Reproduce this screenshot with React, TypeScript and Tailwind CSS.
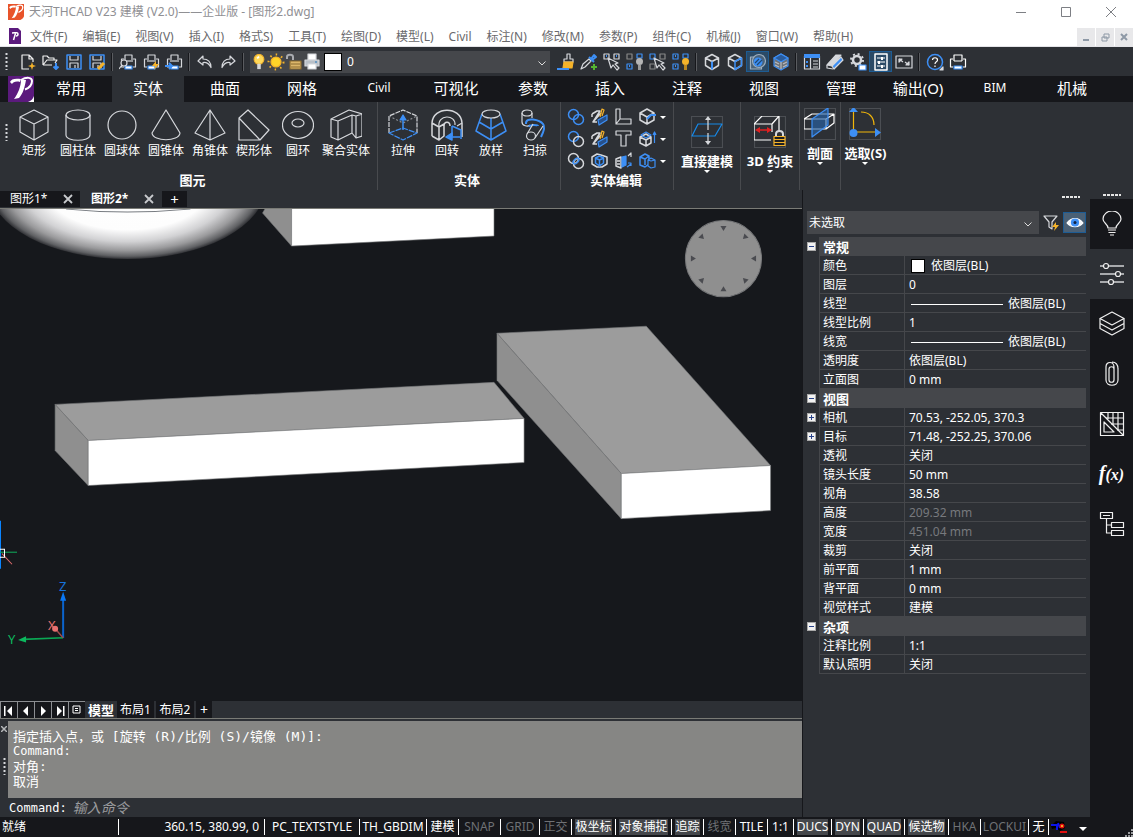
import { useState } from 'react'
import type { ReactNode } from 'react'

const W = '#d6d8dc'
const B = '#3d8ff5'
const Y = '#f5b32a'

function Svg({ size = 18, box, children }: { size?: number; box?: number; children: ReactNode }) {
  const b = box ?? size
  return (
    <svg
      width={size}
      height={size}
      viewBox={`0 0 ${b} ${b}`}
      fill="none"
      stroke={W}
      strokeWidth="1.2"
      strokeLinejoin="round"
      className="block shrink-0"
      aria-hidden="true"
    >
      {children}
    </svg>
  )
}

function Logo({ size, bg }: { size: number; bg: string }) {
  return (
    <svg width={size} height={size} viewBox="0 0 26 26" className="block shrink-0" fill="none" aria-hidden="true">
      <rect width="26" height="26" fill={bg} />
      <path d="M2 6c1-3 5-4 11-3l-1 3C8 5 5 6 4 8z" fill="#fff" />
      <path d="M13 4h5c-1 6-3 14-7 18l-5 1c4-5 7-13 7-19z" fill="#fff" />
      <path d="M13 4c6-3.500 11-2.500 11 1 0 4-3 7-7 8.500" stroke="#fff" strokeWidth="2" />
      <path d="M26 20v6h-6c3-1 5-3 6-6z" fill="#fff" />
    </svg>
  )
}

function Grip({ className = '' }: { className?: string }) {
  return (
    <svg width="3" height="17" viewBox="0 0 3 17" className={'shrink-0 ' + className} aria-hidden="true">
      <path d="M1.5 0v17" stroke="#d6d8dc" strokeWidth="2" strokeDasharray="2 2" />
    </svg>
  )
}

function HGrip({ className = '' }: { className?: string }) {
  return (
    <svg width="18" height="2" viewBox="0 0 18 2" className={'block shrink-0 ' + className} aria-hidden="true">
      <path d="M0 1h18" stroke="#e5e5e5" strokeWidth="2" strokeDasharray="3 1" />
    </svg>
  )
}

// quick access icons, 18 x 18
const floppy = (
  <>
    <path d="M2 2h14v14H2z" stroke={B} strokeWidth="1.500" />
    <path d="M5 3v4h8V3" />
    <path d="M5 15v-5h8v5M10 12v3" />
  </>
)
const printer = (
  <>
    <path d="M6 7V2h7v5M5 6H2.500v8H5M14 6h2.500v8H14" />
    <path d="M5 8h9" />
    <path d="M6 13h7v3H6z" fill="#fff" stroke={B} />
  </>
)
const cube = <path d="M9 1.500l6.500 3.500v7.500L9 16.500l-6.500-4V5zM2.500 5L9 8.500 15.500 5" strokeWidth="1.500" />

const quick: { label: string; icon: ReactNode; on?: boolean }[][] = [
  [
    { label: '新建', icon: <><path d="M10 16H3V2h7l4 4v3M10 2v4h4" stroke="#f0f0f0" /><path d="M13 9l1 3 3 1-3 1-1 3-1-3-3-1 3-1z" fill={Y} stroke="none" /></> },
    { label: '打开', icon: <><path d="M1 12V3h4l2 2h5v2M1 12L5 7h10l-2 3M1 12h9" stroke="#f0f0f0" /><path d="M14 10v6M11.500 13.500L14 16l2.500-2.500" stroke={B} strokeWidth="2" /></> },
    { label: '保存', icon: floppy },
    { label: '另存为', icon: <>{floppy}<path d="M10 16l6-6" stroke={Y} strokeWidth="3" /></> },
  ],
  [
    { label: '打印预览', icon: <>{printer}<circle cx="5" cy="10" r="3" fill="#2d3035" /><path d="M3 12l-3 4" /></> },
    { label: '快速打印', icon: <>{printer}<path d="M14 8l-4 5h3l-1 4 5-6h-3z" fill={Y} stroke="none" /></> },
    { label: '发布', icon: <>{printer}<path d="M0 13h6M4 10l3 3-3 3" stroke={B} strokeWidth="2" /></> },
  ],
  [
    { label: '撤销', icon: <path d="M7 3L2 8l5 4V9.500c4-.5 6 1 8 5C15 9 12 6 7 6z" /> },
    { label: '重做', icon: <path d="M11 3l5 5-5 4V9.500c-4-.5-6 1-8 5C3 9 6 6 11 6z" /> },
  ],
]

const quick2: { label: string; icon: ReactNode; on?: boolean }[][] = [
  [
    { label: '特性匹配', icon: <><path d="M10 1h3v5h3v3H7V6h3z" /><path d="M7 9h9l-1 6H6z" fill={Y} stroke={Y} /><path d="M0 16h12" stroke={B} strokeWidth="2" /></> },
    { label: '拾取', icon: <><path d="M1 16l2-5 6-5 2 2-6 6z" /><path d="M9 4l5 5M11 6l3-4 2 2-4 3" stroke={B} strokeWidth="2" /><path d="M14 11v6M11 14h6" stroke="#55b531" strokeWidth="2" /></> },
    { label: '选择', icon: <><path d="M1 1h5v5H1zM11 1h5v5h-5z" /><path d="M5 5l3 10 2-3 4 5 2-2-4-4 3-1z" fill="#2d3035" /><path d="M3 3h1M13 3h1" stroke={B} strokeWidth="2" /></> },
    { label: '隐藏', icon: <><path d="M1 1h5v5H1z" stroke="#888" /><path d="M11 1h5v4h-5zM1 11h5v5H1z" stroke={B} /><path d="M3 13h1" stroke={B} strokeWidth="2" /><circle cx="13.500" cy="8.500" r="3.500" fill="#b5b5b5" stroke="none" /><path d="M13.500 12v5" strokeWidth="3" stroke="#999" /></> },
    { label: '反选', icon: <><path d="M1 1h5v5H1z" stroke={B} /><path d="M11 1h5v5h-5zM1 11h5v5H1z" stroke="#888" /><path d="M5 5l3 10 2-3 4 5 2-2-4-4 3-1z" fill="#2d3035" /></> },
    { label: '显示', icon: <><path d="M1 1h5v5H1zM11 1h5v4h-5zM1 11h5v5H1z" stroke={B} /><path d="M3 3h1M3 13h1" stroke={B} strokeWidth="2" /><circle cx="13.500" cy="8.500" r="3.500" fill={Y} stroke="none" /><path d="M13.500 12v5" strokeWidth="3" stroke="#b98620" /></> },
  ],
  [
    { label: '等轴测', icon: <>{cube}<path d="M9 8.500v8" stroke={B} strokeWidth="2" /></> },
    { label: '侧视', icon: <>{cube}<path d="M9 8.500l6.500-3.500v7.500L9 16.500z" stroke={B} strokeWidth="1.500" /></> },
    { label: '着色', on: true, icon: <><path d="M1.500 4h11v12h-11z" fill="#4d6478" stroke="#9fb0bf" /><circle cx="10" cy="8" r="6.500" fill="#48627c" stroke="#9fb0bf" /><circle cx="9" cy="9" r="4.500" fill={B} stroke="none" /><path d="M6 10l4-4M8 12l5-5" stroke="#204870" /></> },
    { label: '实体视图', icon: <><path d="M9 1l7 4v8l-7 4-7-4V5z" fill="#6d7278" stroke={B} /><path d="M2 5l7 4 7-4-7-4z" fill="#2a5c9c" stroke={B} /><path d="M3 9l4 2M3 12l4 2M11 11l4-2M11 14l4-2M9 9v7" stroke="#b8bcc2" /></> },
  ],
  [
    { label: '面板', icon: <><path d="M1.500 3h15v13h-15z" /><path d="M1 3h16" stroke={B} strokeWidth="4" /><path d="M4 8v6" stroke={B} strokeWidth="2" strokeDasharray="2 2" /><path d="M7.500 5v11M10 8h5M10 11h5M10 14h5" /></> },
    { label: '清理', icon: <><path d="M1 12L10 2h5l-9 11z" fill={W} /><path d="M6 13l9-9 2 3-9 9z" fill={B} stroke={W} /><path d="M1 12v3l6 1" /></> },
    { label: '设置', icon: <><circle cx="8" cy="7" r="4" strokeWidth="2.500" /><circle cx="8" cy="7" r="6" strokeWidth="2" strokeDasharray="2 2.700" /><path d="M10 12h7v5h-7z" fill="#fff" stroke={B} /></> },
    { label: '特性', on: true, icon: <><path d="M3 1h12v16H3z" stroke="#fff" strokeWidth="1.500" /><path d="M5 5h8M5 9h8M5 13h8" stroke="#fff" /><path d="M10 4v3M7 8v3M10 12v3" stroke="#fff" strokeWidth="2" /></> },
    { label: '全屏', icon: <><path d="M1 3h16v12H1z" /><path d="M4 9V6h3zM14 9v3h-3z" fill={W} /><path d="M4 6l4 3M14 12l-4-3" /></> },
  ],
  [
    { label: '帮助', icon: <><circle cx="9" cy="9" r="7.500" stroke={B} strokeWidth="1.500" /><path d="M6.500 7c0-3 5-3 5 0 0 2-2.500 1.500-2.500 4M9 12.500V14" stroke="#fff" /><path d="M17 14v3h-3z" fill={W} /></> },
    { label: '打印', icon: <><path d="M5 8V2h8v6M5 8h8M4 6H1.500v8H4M14 6h2.500v8H14" stroke="#fff" /><path d="M5 13h8v3H5z" fill="#fff" stroke={B} /></> },
  ],
]

// ribbon icons, 32 x 32
const solids: [string, ReactNode][] = [
  ['矩形', <path d="M16 1l14 7v15l-14 8-14-8V8zM2 8l14 7 14-7M16 15v16" />],
  ['圆柱体', <><ellipse cx="16" cy="6" rx="12" ry="5" /><path d="M4 6v20c0 7 24 7 24 0V6" /></>],
  ['圆球体', <circle cx="16" cy="16" r="14" />],
  ['圆锥体', <path d="M16 1L2 24c1 9 27 9 28 0z" />],
  ['角锥体', <path d="M16 1L1 24l15 7 15-7zM16 1v30" />],
  ['楔形体', <path d="M1 9l9-8 21 20-9 10H1zM1 9l21 22" />],
  ['圆环', <><ellipse cx="16" cy="16" rx="15.500" ry="13.500" /><ellipse cx="16" cy="14" rx="6" ry="4" /></>],
  ['聚合实体', <path d="M1 10L19 1l13 4v22l-6 2-4-5-14 7-7-3zM1 10l7 2 14-6 4 1 6-2M8 12v19M22 6v18M26 7v22" />],
]

const bodies: [string, ReactNode][] = [
  ['拉伸', <><path d="M2 24V7l14-6 14 6v17" strokeDasharray="5 1" /><path d="M2 7l14 7 14-7" stroke="#8a8d92" strokeDasharray="2 2" /><path d="M2 24l14-5 14 5-14 7z" stroke={B} strokeDasharray="6 1" /><path d="M16 21V8" stroke={B} strokeWidth="1.500" /><path d="M16 6l-3 5h6z" fill={B} stroke={B} /></>],
  ['回转', <><path d="M1 27V14C2-3 30-3 31 14v14M1 27l7 4 5-4V17c0-5 6-5 6 0M1 14l7 4 5-3M8 18v12" strokeWidth="1.500" /><path d="M8 18c-2-13 17-13 16-2M31 14l-5 3" /><path d="M21 17l9 4v9M21 17v10" stroke={B} strokeWidth="1.500" /><path d="M20 28h9M15 28l6-4v7z" fill={B} stroke={B} strokeWidth="1.500" /></>],
  ['放样', <><path d="M7 5L1 22l15 9 15-9L25 5M4 13l12 7 12-7M16 9v22" stroke={B} strokeWidth="1.500" /><ellipse cx="16" cy="5" rx="9" ry="4" fill="#2d3035" /></>],
  ['扫掠', <><ellipse cx="8" cy="4" rx="5" ry="3" /><path d="M3 4v9c0 4 6 5 8 3M13 4v5" /><path d="M7 15c-1-8 14-4 17 0 3 3 0 9-2 13M10 18c1-3 9-2 9-1" stroke={B} strokeWidth="2" /><ellipse cx="12" cy="27" rx="4.500" ry="4" /><path d="M8 25l6-10M16 29l8-12" /></>],
]

const rings = (a: string, b: string) => (
  <g strokeWidth="1.500">
    <circle cx="6.500" cy="6.500" r="5" stroke={a} />
    <circle cx="11.500" cy="11.500" r="5" stroke={b} />
  </g>
)
const slice = (
  <>
    <path d="M1 6l5-3h3L2 14l8-9M1 6v3M2 14h4" strokeWidth="1.500" />
    <path d="M7 12l9-5v5l-8 5z" fill="#27508a" stroke={B} />
    <path d="M9 9l2-8 2 1-2 6" stroke={Y} />
  </>
)

const edits: { label: string; icon: ReactNode; menu?: boolean }[][] = [
  [
    { label: '并集', icon: rings(B, B) },
    { label: '剖切', icon: slice },
    { label: '角铁', icon: <path d="M1 1h4v10h11v5H1zM5 11l-4 5" /> },
    { label: '拉伸面', menu: true, icon: <><path d="M8 1l7 4v7l-7 4-7-4V5zM1 5l7 4 7-4M8 9v7" strokeWidth="1.500" /><path d="M8 11l4-4h5" stroke={B} strokeWidth="2" /></> },
  ],
  [
    { label: '差集', icon: rings(B, W) },
    { label: '切割', icon: slice },
    { label: '丁字', icon: <path d="M1 1h15v4h-5v11H6V5H1z" /> },
    { label: '压印', menu: true, icon: <><path d="M7 4l5 3v6l-5 3-6-3V7zM1 7l6 3 5-3M7 10v6" strokeWidth="1.500" /><path d="M2 5l5-3 5 3-5 3zM15.500 13V3M14 5l1.500-3L17 5" stroke={B} /></> },
  ],
  [
    { label: '交集', icon: <>{rings(W, W)}<ellipse cx="9" cy="9" rx="3.500" ry="2" stroke={B} strokeWidth="1.500" transform="rotate(-45 9 9)" /></> },
    { label: '干涉', icon: <><path d="M1 5l5-3 4 1 6 2v7l-5 3H6l-5-3z" strokeWidth="1.500" /><path d="M8.500 4l4 2v5l-4 3-4-3V6zM4.500 6l4 2 4-2M8.500 8v6" stroke={B} strokeWidth="1.500" /></> },
    { label: '转换', icon: <><path d="M1 7l5-2v11l-5-2zM2 9h3M2 12h3" strokeWidth="1.500" /><path d="M7 5l4-1v9l-4 2z" fill={B} stroke={B} /><path d="M13 4l3-3v4" /><path d="M12 15l4-3M16 14v-3h-3" stroke={B} /></> },
    { label: '复制面', menu: true, icon: <><path d="M1 5l5-3 4 2v8l-4 3-5-2zM6 7v6M1 5l5 2 4-3" stroke={B} strokeWidth="1.500" /><path d="M9 8l3-2 4 2v7l-4 1-3-2zM9 8l3 1 4-1" stroke={B} fill="#2d3035" /></> },
  ],
]

const menus = ['文件(F)', '编辑(E)', '视图(V)', '插入(I)', '格式S)', '工具(T)', '绘图(D)', '模型(L)', 'Civil', '标注(N)', '修改(M)', '参数(P)', '组件(C)', '机械(J)', '窗口(W)', '帮助(H)']
const tabs = ['常用', '实体', '曲面', '网格', 'Civil', '可视化', '参数', '插入', '注释', '视图', '管理', '输出(O)', 'BIM', '机械']

type Row = { name: string; value?: string; kind?: 'head' | 'swatch' | 'line' | 'dim'; box?: '-' | '+' }

const rows: Row[] = [
  { name: '常规', kind: 'head', box: '-' },
  { name: '颜色', value: '依图层(BL)', kind: 'swatch' },
  { name: '图层', value: '0' },
  { name: '线型', value: '依图层(BL)', kind: 'line' },
  { name: '线型比例', value: '1' },
  { name: '线宽', value: '依图层(BL)', kind: 'line' },
  { name: '透明度', value: '依图层(BL)' },
  { name: '立面图', value: '0 mm' },
  { name: '视图', kind: 'head', box: '-' },
  { name: '相机', value: '70.53, -252.05, 370.3', box: '+' },
  { name: '目标', value: '71.48, -252.25, 370.06', box: '+' },
  { name: '透视', value: '关闭' },
  { name: '镜头长度', value: '50 mm' },
  { name: '视角', value: '38.58' },
  { name: '高度', value: '209.32 mm', kind: 'dim' },
  { name: '宽度', value: '451.04 mm', kind: 'dim' },
  { name: '裁剪', value: '关闭' },
  { name: '前平面', value: '1 mm' },
  { name: '背平面', value: '0 mm' },
  { name: '视觉样式', value: '建模' },
  { name: '杂项', kind: 'head', box: '-' },
  { name: '注释比例', value: '1:1' },
  { name: '默认照明', value: '关闭' },
]

const status: { text: string; w: string; state?: 'on' | 'off' }[] = [
  { text: 'PC_TEXTSTYLE', w: 'w-[95px]' },
  { text: 'TH_GBDIM', w: 'w-[67px]' },
  { text: '建模', w: 'w-8' },
  { text: 'SNAP', w: 'w-[42px]', state: 'off' },
  { text: 'GRID', w: 'w-[39px]', state: 'off' },
  { text: '正交', w: 'w-8', state: 'off' },
  { text: '极坐标', w: 'w-11', state: 'on' },
  { text: '对象捕捉', w: 'w-14', state: 'on' },
  { text: '追踪', w: 'w-8', state: 'on' },
  { text: '线宽', w: 'w-8', state: 'off' },
  { text: 'TILE', w: 'w-8' },
  { text: '1:1', w: 'w-[26px]' },
  { text: 'DUCS', w: 'w-[38px]', state: 'on' },
  { text: 'DYN', w: 'w-8', state: 'on' },
  { text: 'QUAD', w: 'w-[41px]', state: 'on' },
  { text: '候选物', w: 'w-11', state: 'on' },
  { text: 'HKA', w: 'w-8', state: 'off' },
  { text: 'LOCKUI', w: 'w-[48px]', state: 'off' },
  { text: '无', w: 'w-5' },
]

function Sep() {
  return <span className="mx-[3px] h-[18px] w-[2px] shrink-0 border-l border-[#16171b] bg-[#5a5c60]" />
}

function QuickGroup({ items }: { items: { label: string; icon: ReactNode; on?: boolean }[] }) {
  return (
    <div className="flex shrink-0">
      {items.map((it) => (
        <button
          key={it.label}
          aria-label={it.label}
          className={
            'flex h-[21px] w-[23px] items-center justify-center' +
            (it.on ? ' border border-[#1d5c94] bg-[#2b4a66]' : '')
          }
        >
          <Svg>{it.icon}</Svg>
        </button>
      ))}
    </div>
  )
}

function Caret() {
  return (
    <svg width="6" height="3" viewBox="0 0 6 3" className="block shrink-0" aria-hidden="true">
      <path d="M0 0h6L3 3z" fill="#fff" />
    </svg>
  )
}

function Big({ label, icon, wide }: { label: string; icon: ReactNode; wide?: boolean }) {
  return (
    <button className={'flex flex-col items-center gap-[2px] ' + (wide ? 'w-[52px]' : 'w-11')}>
      <Svg size={32}>{icon}</Svg>
      <span className="text-[12px] leading-4 whitespace-nowrap">{label}</span>
    </button>
  )
}

function Drop({ label, icon, low, w }: { label: string; icon: ReactNode; low?: boolean; w: string }) {
  return (
    <div className={'flex shrink-0 flex-col items-center border-[#484a4e] ' + w + (low ? ' pt-[14px]' : ' pt-[6px]')}>
      <button className="flex flex-col items-center">
        <Svg size={32}>
          <path d="M.5.5h31v31H.5z" stroke="#4b4e53" />
          {icon}
        </Svg>
        <span className="mt-1 text-[13px] leading-[18px] font-bold whitespace-nowrap">{label}</span>
        <Caret />
      </button>
    </div>
  )
}

function Viewport() {
  return (
    <svg
      viewBox="0 209 802 491"
      preserveAspectRatio="xMinYMin slice"
      className="block min-h-0 w-full flex-1 bg-[#16181c]"
      role="img"
      aria-label="图形2"
    >
      <defs>
        <radialGradient id="ring" gradientUnits="userSpaceOnUse" cx="0" cy="0" r="1" gradientTransform="translate(127 186) scale(138 73)">
          <stop offset="0" stopColor="#fff" />
          <stop offset=".6" stopColor="#fdfdfd" />
          <stop offset=".76" stopColor="#d2d2d4" />
          <stop offset=".88" stopColor="#9a9a9c" />
          <stop offset=".96" stopColor="#606164" />
          <stop offset="1" stopColor="#2e2f33" />
        </radialGradient>
      </defs>
      <ellipse cx="127" cy="186" rx="138" ry="73" fill="url(#ring)" />
      <path d="M66 209q60 6 124 0" stroke="#777b80" fill="none" />
      <g stroke="#77787a" strokeWidth=".6">
        <path d="M262 213l3-5h26v38z" fill="#8f8f8f" />
        <path d="M291 208h202v28l-202 10z" fill="#fff" />
        <path d="M55 404l438-22 30 36-435 22z" fill="#9c9c9c" />
        <path d="M55 404l33 36v45l-33-35z" fill="#8f8f8f" />
        <path d="M88 440l435-22v44L88 485z" fill="#fff" />
        <path d="M496 333l149-7 124 139-149 8z" fill="#9c9c9c" />
        <path d="M496 333l124 140v45L496 380z" fill="#8f8f8f" />
        <path d="M620 473l149-8v45l-149 8z" fill="#fff" />
      </g>
      <circle cx="722" cy="258.500" r="38" fill="#8f8f8f" stroke="#77787a" />
      <g fill="#4a4b50">
        {[0, 45, 90, 135, 180, 225, 270, 315].map((a) => (
          <path key={a} d="M719 226h6l-3 5z" transform={`rotate(${a} 722 258.500)`} />
        ))}
      </g>
      <path d="M.5 520v48" stroke="#0a84ff" />
      <path d="M0 551.500h17" stroke="#0fae5c" />
      <path d="M2 553l10 10.500" stroke="#e87070" />
      <path d="M-1 548.500h5.500v8H-1" stroke="#fff" fill="none" />
      <path d="M63 637v-40" stroke="#0b63cc" strokeWidth="2" />
      <path d="M60 600l3-9 3 9z" fill="#0a78f5" />
      <path d="M63 637l-40 1.500" stroke="#0aa854" strokeWidth="1.500" />
      <path d="M18 639l8-3.500v6z" fill="#0cb85e" />
      <path d="M63 637l-7-8" stroke="#a04a4c" strokeWidth="1.500" />
      <circle cx="55" cy="628" r="3" fill="#e87070" />
      <g fontFamily="Noto Sans, sans-serif" fontSize="13">
        <text x="59" y="590" fill="#1673dd">Z</text>
        <text x="8" y="643" fill="#0cb85e">Y</text>
        <text x="48" y="629" fill="#e87070">X</text>
      </g>
    </svg>
  )
}

function CommandBar() {
  return (
    <div className="flex shrink-0 border-t border-[#7a7b76] pt-[2px] font-['DejaVu_Sans_Mono','Noto_Sans_CJK_SC',monospace]">
      <div className="flex w-2 shrink-0 flex-col items-center pt-[5px]">
        <button aria-label="关闭" className="h-[6px] w-[6px]">
          <svg width="6" height="6" viewBox="0 0 6 6" className="block">
            <path d="M0 0l6 6M6 0L0 6" stroke="#b5b7ba" strokeWidth="1.500" />
          </svg>
        </button>
        <Grip className="mt-[26px]" />
      </div>
      <div className="min-w-0 flex-1">
        <div className="h-[77px] bg-[#868684] pt-2 pl-[5px] text-[12px] leading-[15px]">
          <p className="text-[13px]">指定插入点，或 [旋转 (R)/比例 (S)/镜像 (M)]:</p>
          <p>Command:</p>
          <p className="text-[13px]">对角:</p>
          <p className="text-[13px]">取消</p>
        </div>
        <label className="flex h-[19px] items-center gap-[6px] pl-[1px] text-[12px]">
          Command:
          <input
            placeholder="输入命令"
            className="min-w-0 flex-1 bg-transparent text-[14px] leading-4 italic outline-none placeholder:text-[#9a9b9e]"
          />
        </label>
      </div>
    </div>
  )
}

function Properties() {
  return (
    <aside className="flex w-[288px] shrink-0 flex-col border-l border-[#16171b] pr-1 pl-1">
      <HGrip className="mt-[6px] mr-[6px] self-end" />
      <div className="mt-[13px] flex items-center">
        <div className="relative flex-1">
          <select aria-label="选取" className="h-[23px] w-full appearance-none bg-[#45474b] pl-[2px] text-[12px] outline-none">
            <option>未选取</option>
          </select>
          <svg width="8" height="5" viewBox="0 0 8 5" className="pointer-events-none absolute top-[11px] right-[7px]">
            <path d="M.5.5L4 4 7.500.5" stroke="#ddd" fill="none" />
          </svg>
        </div>
        <button aria-label="快速选择" className="flex h-[21px] w-6 items-center justify-center">
          <Svg>
            <path d="M2 2h13l-5 6v7l-3-2V8z" />
            <path d="M14 8l-4 5h3l-1 4 5-6h-3z" fill={Y} stroke="none" />
          </Svg>
        </button>
        <button aria-label="显示" className="flex h-[21px] w-[23px] items-center justify-center border border-[#1d5c94] bg-[#4a6075]">
          <Svg>
            <path d="M1 9c4-6 12-6 16 0-4 5-12 5-16 0z" fill="#f2f5f8" stroke="#fff" />
            <circle cx="9" cy="8.500" r="3.500" fill={B} stroke={B} />
            <circle cx="9" cy="8.500" r="1.500" fill="#102040" stroke="none" />
          </Svg>
        </button>
      </div>
      <table className="mt-[3px] w-full table-fixed border-separate border-spacing-0 text-[12px] leading-4">
        <colgroup>
          <col className="w-3" />
          <col className="w-[85px]" />
          <col />
        </colgroup>
        <tbody>
          {rows.map((r) => (
            <tr key={r.name}>
              <td className="h-[19px] p-0">
                {r.box && (
                  <button aria-label={r.name} className="block h-[9px] w-[9px] border border-[#aaa] bg-[#f2f2f2]">
                    <svg width="7" height="7" viewBox="0 0 7 7" className="block">
                      <path d={r.box === '+' ? 'M1 3.500h5M3.500 1v5' : 'M1 3.500h5'} stroke="#26418a" />
                    </svg>
                  </button>
                )}
              </td>
              {r.kind === 'head' ? (
                <th colSpan={2} scope="rowgroup" className="bg-[#45474b] p-0 pl-1 text-left text-[13px] font-bold">
                  {r.name}
                </th>
              ) : (
                <>
                  <th scope="row" className="border-b border-l border-[#45474b] p-0 pt-[2px] pl-[3px] text-left font-normal">
                    {r.name}
                  </th>
                  <td className="border-b border-l border-[#45474b] p-0 pt-[2px] pl-1">
                    <div className={'flex items-center' + (r.kind === 'dim' ? ' text-[#77797d]' : '')}>
                      {r.kind === 'swatch' && <span className="mr-[6px] ml-[2px] h-[14px] w-[14px] border border-black bg-white" />}
                      {r.kind === 'line' && <span className="mr-[5px] ml-[2px] h-px w-[92px] bg-white" />}
                      {r.value}
                    </div>
                  </td>
                </>
              )}
            </tr>
          ))}
        </tbody>
      </table>
    </aside>
  )
}

const rail: { label: string; icon: ReactNode; on?: boolean }[] = [
  { label: '提示', icon: <><path d="M9 17c0-4-5-5-5-9a9 8 0 0 1 18 0c0 4-5 5-5 9z" /><path d="M9 19h8M9.500 21.500h7M11 24h4" /></> },
  { label: '特性', on: true, icon: <><path d="M1 5h24M1 13h24M1 21h24" stroke="#a8aaad" strokeWidth="2" /><circle cx="7" cy="5" r="2.500" fill="#2d3035" /><circle cx="19" cy="13" r="2.500" fill="#2d3035" /><circle cx="12" cy="21" r="2.500" fill="#2d3035" /></> },
  { label: '图层', icon: <><path d="M13 1l12 6.500L13 14 1 7.500z" /><path d="M1 7.500v5L13 19l12-6.500v-5M1 12.500v5L13 24l12-6.500v-5" /></> },
  { label: '附件', icon: <path d="M10 8v11c0 3 5 3 5 0V6c0-6-8-6-8 0v13c0 7 12 7 12 0V7M10 8c0-3 5-3 5 0M19 8c0-3-1-7-6-7" /> },
  { label: '图纸', icon: <><path d="M1.500 1.500h23v23h-23zM1.500 1.500l23 23M5 11v10h10z" /><path d="M7 7h17M12 13h12M18 19h6M9 2v6M14 2v12M19 2v17" /></> },
  { label: '函数', icon: null },
  { label: '结构', icon: <><path d="M1.500 1.500h12v6h-12zM12.500 11.500h12v5h-12zM12.500 19.500h12v5h-12z" /><path d="M4 4.500h7M7.500 7.500v14.500h5M7.500 14h5" /></> },
]

function LayerBar() {
  return (
    <div className="flex h-[22px] w-[300px] shrink-0 items-center bg-[#45474b] pl-[1px]">
      <Svg size={16} box={18}>
        <circle cx="9" cy="6" r="5.500" fill="#ffd95a" stroke={Y} />
        <path d="M9 11v6" stroke="#d8d8d8" strokeWidth="4" />
        <path d="M7 5l2-2" stroke="#fff" strokeWidth="2" />
      </Svg>
      <Svg>
        <circle cx="9" cy="9" r="7.500" stroke={Y} strokeWidth="2" strokeDasharray="1.500 4.300" />
        <circle cx="9" cy="9" r="5" fill="#ffd428" stroke={Y} />
      </Svg>
      <Svg>
        <path d="M2 6V4c0-3 6-3 6 0v3" stroke="#a9abb0" strokeWidth="2" />
        <path d="M5 8h11v8H5z" fill="#dcb66a" stroke="#8a6a30" />
        <path d="M6 11h9M6 14h9" stroke="#8a6a30" />
      </Svg>
      <Svg>
        <path d="M5 1h8v6H5z" fill="#fff" />
        <path d="M2 7h14v6H2z" fill="#b9c0c8" />
        <path d="M5 11h8v5H5z" fill="#fff" />
        <path d="M12 9h2" stroke="#27b" />
      </Svg>
      <span className="ml-[3px] h-[18px] w-[18px] border border-black bg-white" />
      <div className="relative min-w-0 flex-1">
        <select aria-label="图层" className="h-[22px] w-full appearance-none bg-transparent pl-[5px] text-[12px] outline-none">
          <option>0</option>
        </select>
        <svg width="8" height="5" viewBox="0 0 8 5" className="pointer-events-none absolute top-[10px] right-1">
          <path d="M.5.5L4 4 7.500.5" stroke="#ddd" fill="none" />
        </svg>
      </div>
    </div>
  )
}

function DocTab({ name, active, onSelect }: { name: string; active: boolean; onSelect: () => void }) {
  return (
    <div className={'flex w-20 items-center justify-between pr-[7px] pl-[10px] ' + (active ? 'font-bold' : 'bg-[#16171b]')}>
      <button onClick={onSelect} className="text-[12px] leading-4">{name}</button>
      <button aria-label={'关闭 ' + name}>
        <svg width="10" height="10" viewBox="0 0 10 10" className="block">
          <path d="M1 1l8 8M9 1L1 9" stroke="#c8cacd" strokeWidth="1.800" />
        </svg>
      </button>
    </div>
  )
}

export default function App() {
  const [tab, setTab] = useState('实体')
  const [doc, setDoc] = useState('图形2*')

  return (
    <div className="flex h-screen flex-col overflow-hidden bg-[#2d3035] font-['Noto_Sans','Noto_Sans_CJK_SC',sans-serif] text-[12px] leading-4 text-white">
      <header className="shrink-0 border-b border-[#e4e4e8] bg-white text-[#69696c]">
        <div className="flex h-6 items-center pl-2">
          <Logo size={16} bg="#e8532a" />
          <h1 className="ml-[5px] text-[12px] text-[#909094]">天河THCAD V23 建模 (V2.0)——企业版 - [图形2.dwg]</h1>
          <div className="ml-auto flex self-stretch">
            {['M0 5.500h10', 'M.5.500h9v9h-9z', 'M0 0l10 10M10 0L0 10'].map((d, i) => (
              <button key={d} aria-label={['最小化', '最大化', '关闭'][i]} className="flex w-[45px] items-center justify-center">
                <svg width="10" height="10" viewBox="0 0 10 10" fill="none" stroke="#7d7f84">
                  <path d={d} />
                </svg>
              </button>
            ))}
          </div>
        </div>
        <div className="flex h-[22px] items-end pl-[9px]">
          <svg width="12" height="16" viewBox="0 0 12 16" className="mb-[2px] shrink-0">
            <path d="M0 0h9l3 3v13H0z" fill="#5b1a7d" />
            <path d="M3 5c3 0 6-1 6 1S8 8 7 8M6.500 5.500L4.500 12" stroke="#fff" strokeWidth="1.500" fill="none" />
          </svg>
          <nav className="mb-[1px] ml-[9px] flex gap-[15px]">
            {menus.map((m) => (
              <button key={m} className="whitespace-nowrap">{m}</button>
            ))}
          </nav>
          <div className="ml-auto flex gap-[1px]">
            {['M1 7h6', 'M3 1h5v4H3zM1 4h5v4H1z', 'M1 1l6 6M7 1L1 7'].map((d, i) => (
              <button key={d} aria-label={['最小化窗口', '还原窗口', '关闭窗口'][i]} className="flex h-[18px] w-[18px] items-center justify-center bg-[#e8e8ea]">
                <svg width="9" height="9" viewBox="0 0 9 9" fill="none" stroke="#8e99a6" strokeWidth={i === 1 ? 1 : 2}>
                  <path d={d} />
                </svg>
              </button>
            ))}
          </div>
        </div>
      </header>

      <div className="flex h-[29px] shrink-0 items-center pl-[5px]">
        <Grip className="mr-2" />
        <QuickGroup items={quick[0]} />
        <Sep />
        <QuickGroup items={quick[1]} />
        <Sep />
        <QuickGroup items={quick[2]} />
        <Sep />
        <span className="w-[3px]" />
        <LayerBar />
        <span className="w-1" />
        <QuickGroup items={quick2[0]} />
        <Sep />
        <QuickGroup items={quick2[1]} />
        <Sep />
        <QuickGroup items={quick2[2]} />
        <Sep />
        <QuickGroup items={quick2[3]} />
      </div>

      <nav className="flex h-[26px] shrink-0 bg-[#16171b] pl-2">
        <Logo size={26} bg="#5b1a7d" />
        <div className="ml-[1px] flex gap-[5px]">
          {tabs.map((t) => (
            <button
              key={t}
              onClick={() => setTab(t)}
              className={
                'w-[72px] pb-[2px] whitespace-nowrap ' +
                (/^[A-Z]/.test(t) ? 'text-[12px]' : 'text-[15px]') +
                (t === tab ? ' bg-[#2d3035]' : '')
              }
            >
              {t}
            </button>
          ))}
        </div>
      </nav>

      <div className="flex h-[88px] shrink-0">
        <div className="flex w-3 items-start justify-center pt-[22px]">
          <Grip />
        </div>
        <section className="flex w-[366px] shrink-0 flex-col border-r border-[#484a4e] pt-[7px]">
          <div className="flex">
            {solids.map(([label, icon], i) => (
              <Big key={label} label={label} icon={icon} wide={i === 7} />
            ))}
          </div>
          <h2 className="mt-[11px] pr-1 text-center text-[13px] leading-5 font-bold">图元</h2>
        </section>
        <section className="flex w-[183px] shrink-0 flex-col items-center border-r border-[#484a4e] pt-[7px]">
          <div className="flex">
            {bodies.map(([label, icon]) => (
              <Big key={label} label={label} icon={icon} />
            ))}
          </div>
          <h2 className="mt-[11px] pr-1 text-[13px] leading-5 font-bold">实体</h2>
        </section>
        <section className="flex w-[113px] shrink-0 flex-col border-r border-[#484a4e] pt-1 pl-[6px]">
          {edits.map((line, i) => (
            <div key={i} className="flex h-[22px] items-center gap-[6px]">
              {line.map((e) => (
                <button key={e.label} aria-label={e.label} className="flex items-center gap-[3px]">
                  <Svg>{e.icon}</Svg>
                  {e.menu && <Caret />}
                </button>
              ))}
            </div>
          ))}
          <h2 className="pr-2 text-center text-[13px] leading-4 font-bold">实体编辑</h2>
        </section>
        <Drop
          low
          w="w-[67px] border-r"
          label="直接建模"
          icon={<><path d="M7 8h24l-7 12H1z" stroke="#1789e8" /><path d="M17 14V2M17 17v10" stroke="#ddd" /><path d="M14 25h6l-3 4z" fill={W} stroke="none" /><path d="M14 4l3-4 3 4z" fill={W} stroke="none" /></>}
        />
        <Drop
          low
          w="w-[59px] border-r"
          label="3D 约束"
          icon={<><path d="M25 15V0H8L0 8v16h17M0 8h18v8M18 8l7-8" stroke="#fff" /><path d="M3 14h13" stroke="#e02020" strokeWidth="1.500" /><path d="M1 14l5-3v6zM18 14l-5-3v6z" fill="#e02020" stroke="none" /><path d="M22 20v-2c0-4 7-4 7 0v2" strokeWidth="2" /><path d="M20 20.500h11v9H20z" fill="#1d1f22" stroke={Y} /><path d="M20 23.500h11M20 26.500h11" stroke={Y} /></>}
        />
        <Drop
          w="w-[41px] border-r"
          label="剖面"
          icon={<><path d="M0 11l8-5h22v9l-8 6H0zM0 11h22v10M22 11l8-5" stroke="#fff" /><path d="M8 11L24 0v17L8 29z" fill="#2867b0" fillOpacity=".6" stroke={B} /></>}
        />
        <Drop
          w="w-[49px]"
          label="选取(S)"
          icon={<><path d="M4.500 4v20h22M12 4c8 0 13 5 13 13" stroke="#f2b60a" /><circle cx="4.500" cy="25" r="4" fill={B} stroke="none" /><path d="M0 4h9L4.500-1zM26 20v9l6-4.500z" fill={B} stroke="none" /></>}
        />
      </div>

      <div className="flex min-h-0 flex-1">
        <main className="flex min-w-0 flex-1 flex-col">
          <div className="flex h-[19px] shrink-0 gap-[1px] border-b border-[#7a7b76] pt-[1px] pb-[1px]">
            <DocTab name="图形1*" active={doc === '图形1*'} onSelect={() => setDoc('图形1*')} />
            <DocTab name="图形2*" active={doc === '图形2*'} onSelect={() => setDoc('图形2*')} />
            <button aria-label="新建图形" className="w-[25px] bg-[#16171b] text-[15px] leading-4">+</button>
          </div>
          <Viewport />
          <div className="flex h-[17px] shrink-0 items-stretch">
            {['', 'M8 3L3 8l5 5z', 'M4 3l5 5-5 5z', 'M3 3l5 5-5 5z', 'M2 3h7v7H2zM4 5.500h3M4 7.500h3'].map((d, i) => (
              <button key={i} aria-label={['首个', '上一个', '下一个', '最后', '列表'][i]} className="flex w-[17px] items-center justify-center border-t border-l border-[#8c8e92] bg-[#16171b]">
                <svg width="12" height="15" viewBox="0 0 12 15" fill={i === 4 ? 'none' : '#fff'} stroke={i === 4 ? '#fff' : 'none'}>
                  {i === 0 ? <path d="M1 3h1.500v10H1zM9 3L4 8l5 5z" /> : <path d={d} />}
                  {i === 3 && <path d="M9 3h1.500v10H9z" />}
                </svg>
              </button>
            ))}
            <button className="w-8 text-[13px] font-bold">模型</button>
            <button className="w-[39px] border-r-2 border-[#2d3035] bg-[#16171b]">布局1</button>
            <button className="w-[40px] border-r-2 border-[#2d3035] bg-[#16171b]">布局2</button>
            <button aria-label="新建布局" className="w-4 bg-[#16171b] text-[14px]">+</button>
          </div>
          <CommandBar />
        </main>
        <Properties />
        <div className="flex w-[43px] shrink-0 flex-col">
          <HGrip className="mt-[4px] mb-[3px] ml-[13px]" />
          <nav className="flex flex-1 flex-col bg-[#16171b]">
            {rail.map((r) => (
              <button key={r.label} aria-label={r.label} className={'flex h-[50px] items-center justify-center' + (r.on ? ' bg-[#2d3035]' : '')}>
                {r.icon ? (
                  <Svg size={26}>
                    <g stroke="#f0f0f0">{r.icon}</g>
                  </Svg>
                ) : (
                  <span className="font-['Liberation_Serif',serif] text-[20px] font-bold italic">
                    f<span className="text-[16px]">(x)</span>
                  </span>
                )}
              </button>
            ))}
          </nav>
        </div>
      </div>

      <footer className="flex h-5 shrink-0 items-center bg-[#16171b] text-[12px]">
        <div className="w-[119px] border-r border-white pl-[2px]">就绪</div>
        <div className="w-[146px] border-r border-white pr-[5px] text-right whitespace-nowrap">360.15, 380.99, 0</div>
        {status.map((s) => (
          <div key={s.text} className={'flex shrink-0 justify-center border-r border-white ' + s.w}>
            <button
              className={
                'whitespace-nowrap' +
                (s.state === 'on' ? ' bg-[#45474b]' : s.state === 'off' ? ' text-[#6f7175]' : '')
              }
            >
              {s.text}
            </button>
          </div>
        ))}
        <svg width="18" height="14" viewBox="0 0 18 14" className="ml-[1px]">
          <path d="M1 6l5-5 8 1 1 6-5 3-4-3-4 1z" fill="#000" />
          <path d="M1 5h6v5M8 3l2 5" stroke="#0a14e8" strokeWidth="2" fill="none" />
          <circle cx="12" cy="6" r="2.500" fill="#e01010" />
          <circle cx="12" cy="6" r="1" fill="#ffd428" />
          <path d="M10 12h7" stroke="#e01010" strokeWidth="2" />
        </svg>
        <button aria-label="更多" className="ml-[11px]">
          <svg width="8" height="4" viewBox="0 0 8 4" className="mt-1 block">
            <path d="M0 0h8L4 4z" fill="#fff" />
          </svg>
        </button>
        <svg width="8" height="8" viewBox="0 0 8 8" className="ml-auto self-end">
          <path d="M6 0h2v2H6zM3 3h2v2H3zM6 3h2v2H6zM0 6h2v2H0zM3 6h2v2H3zM6 6h2v2H6z" fill="#9a9c9f" />
        </svg>
      </footer>
    </div>
  )
}
